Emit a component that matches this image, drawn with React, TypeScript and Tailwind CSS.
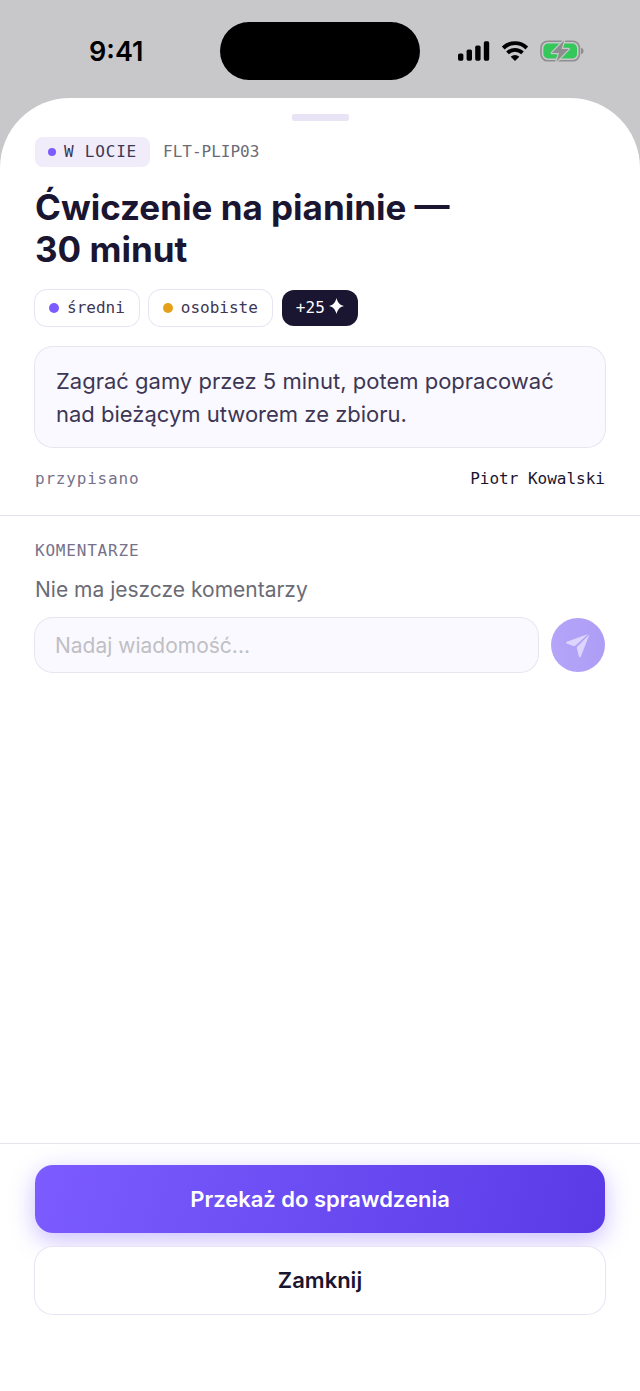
import { useState } from "react";

const tags = [
  { label: "średni", dot: "bg-[#7c5cff]" },
  { label: "osobiste", dot: "bg-[#e5a019]" },
];

function SignalIcon() {
  return (
    <svg width="32" height="20" viewBox="0 0 32 20" fill="currentColor" aria-hidden="true">
      <rect x="0" y="12.5" width="5.4" height="7.2" rx="1.6" />
      <rect x="8.6" y="8.6" width="5.4" height="11.1" rx="1.6" />
      <rect x="17.2" y="4.6" width="5.4" height="15.1" rx="1.6" />
      <rect x="25.8" y="0.3" width="5.4" height="19.4" rx="1.6" />
    </svg>
  );
}

function WifiIcon() {
  return (
    <svg width="28" height="20" viewBox="0 0 28 20" fill="none" aria-hidden="true">
      <path d="M2.2 7a16.8 16.8 0 0 1 23.6 0" stroke="currentColor" strokeWidth="3.9" />
      <path d="M6.5 11.9a10.6 10.6 0 0 1 15 0" stroke="currentColor" strokeWidth="3.7" />
      <path d="M14 20l-4.3-4.3a6.2 6.2 0 0 1 8.6 0z" fill="currentColor" />
    </svg>
  );
}

function BatteryIcon() {
  return (
    <svg width="44" height="22" viewBox="0 0 44 22" aria-hidden="true">
      <rect x="1" y="1.2" width="38.4" height="19.6" rx="6.6" fill="none" stroke="#8e8e90" strokeWidth="1.6" />
      <path d="M41 7.8c1.6.6 2.6 1.8 2.6 3.2s-1 2.6-2.6 3.2z" fill="#8e8e90" />
      <rect x="3.4" y="3.6" width="33.6" height="14.8" rx="4.4" fill="#34c759" />
      <path
        d="M24.2 .2L11.8 13h7.2L16.4 21.800 28.800 9h-7.200z"
        fill="#8e8e90"
        stroke="#c8c8ca"
        strokeWidth="2.4"
        strokeLinejoin="round"
        paintOrder="stroke"
      />
    </svg>
  );
}

function SparkIcon() {
  return (
    <svg width="15" height="16" viewBox="0 0 15 16" fill="currentColor" aria-hidden="true">
      <path d="M7.5 0C8.8 4.8 10.5 6.8 15 8c-4.5 1.2-6.2 3.2-7.5 8C6.2 11.2 4.5 9.2 0 8c4.500-1.200 6.200-3.200 7.500-8z" />
    </svg>
  );
}

function SendIcon() {
  return (
    <svg width="24" height="25" viewBox="0 0 24 25" fill="currentColor" aria-hidden="true">
      <path d="M22.200.900L.8 8.700c-1 .4-1 1.400 0 1.900l5.800 2.100c1.200.4 2.200.4 3.200-.4z" />
      <path d="M23.400 1.600L11.400 13.400c-.6.700-.8 1.500-.4 2.500l1.900 7.500c.3 1.100 1.500 1.200 2 .2z" />
    </svg>
  );
}

function StatusBar() {
  return (
    <header className="relative flex h-[98px] items-center justify-between pt-1 pr-14 pl-[89px] text-black">
      <span className="pt-0.5 text-[27px] font-semibold">9:41</span>
      <div className="absolute inset-x-0 top-[22px] mx-auto h-[58px] w-[200px] rounded-full bg-black" />
      <div className="flex items-center gap-[11px]">
        <SignalIcon />
        <WifiIcon />
        <BatteryIcon />
      </div>
    </header>
  );
}

export default function App() {
  const [message, setMessage] = useState("");

  return (
    <div className="flex min-h-screen flex-col bg-[#c8c8ca] font-['Inter',sans-serif] text-[#1a1530]">
      <StatusBar />

      <main className="flex flex-1 flex-col rounded-t-[70px] bg-white pt-4">
        <div className="mx-auto h-[7px] w-[57px] rounded-xs bg-[#e8e4f5]" />

        <section className="px-[35px] pt-4 pb-6">
          <div className="flex items-center gap-[13px] font-['DejaVu_Sans_Mono',monospace] text-base">
            <span className="flex h-[30px] items-center gap-2 rounded-lg bg-[#f0ecf9] px-[13px] tracking-wider text-[#3d3654]">
              <span className="size-2 rounded-full bg-[#7c5cff]" />
              W LOCIE
            </span>
            <span className="text-[#6b6b76]">FLT-PLIP03</span>
          </div>

          <h1 className="mt-[19px] max-w-[460px] text-[35px] leading-[42px] font-bold">
            Ćwiczenie na pianinie — 30 minut
          </h1>

          <div className="mt-5 flex gap-2.5 font-['DejaVu_Sans_Mono',monospace] text-base">
            {tags.map((tag) => (
              <span
                key={tag.label}
                className="flex h-9 items-center gap-2 rounded-xl px-3.5 text-[#3d3654] ring-1 ring-[#e8e4f5]"
              >
                <span className={`size-2.5 rounded-full ${tag.dot}`} />
                {tag.label}
              </span>
            ))}
            <span className="flex h-9 items-center gap-1 rounded-xl bg-[#1a1530] px-3.5 text-white">
              +25
              <span className="pb-1">
                <SparkIcon />
              </span>
            </span>
          </div>

          <p className="mt-[21px] rounded-[18px] bg-[#faf9ff] px-[21px] pt-[18px] pb-4 text-[22px] leading-[33px] text-[#3d3654] ring-1 ring-[#e8e4f0]">
            Zagrać gamy przez 5 minut, potem popracować nad bieżącym utworem ze zbioru.
          </p>

          <dl className="mt-5 flex items-center justify-between font-['DejaVu_Sans_Mono',monospace] text-base">
            <dt className="tracking-wider text-[#77718a]">przypisano</dt>
            <dd>Piotr Kowalski</dd>
          </dl>
        </section>

        <section className="border-t border-[#e4e1f0] px-[35px] pt-[23px]">
          <h2 className="font-['DejaVu_Sans_Mono',monospace] text-base tracking-wider text-[#77718a]">
            KOMENTARZE
          </h2>
          <p className="mt-[13px] text-[21px] leading-7 text-[#6b6b76]">Nie ma jeszcze komentarzy</p>

          <form className="mt-3.5 flex items-center gap-[13px]" onSubmit={(event) => event.preventDefault()}>
            <input
              type="text"
              aria-label="Wiadomość"
              placeholder="Nadaj wiadomość..."
              value={message}
              onChange={(event) => setMessage(event.target.value)}
              className="h-[54px] min-w-0 flex-1 rounded-[18px] bg-[#faf9ff] px-5 text-[21px] ring-1 ring-[#e8e4f0] outline-none placeholder:text-[#bfbfc4]"
            />
            <button
              type="submit"
              aria-label="Wyślij"
              className="flex size-[54px] items-center justify-center rounded-full bg-linear-to-r from-[#b4a5f9] to-[#ae9df5] text-[#ddd5fd]"
            >
              <SendIcon />
            </button>
          </form>
        </section>

        <footer className="mt-auto flex flex-col gap-3.5 border-t border-[#e6e5ec] px-[35px] pt-[21px] pb-[77px]">
          <button
            type="button"
            className="h-[68px] rounded-[18px] bg-linear-105 from-[#7c5cff] to-[#5a3ae6] text-[22px] font-semibold text-white shadow-[0_7px_25px_rgba(124,92,255,0.4)]"
          >
            Przekaż do sprawdzenia
          </button>
          <button
            type="button"
            className="relative h-[67px] rounded-[18px] bg-white text-[22px] font-semibold ring-1 ring-[#e8e4f5]"
          >
            Zamknij
          </button>
        </footer>
      </main>
    </div>
  );
}
